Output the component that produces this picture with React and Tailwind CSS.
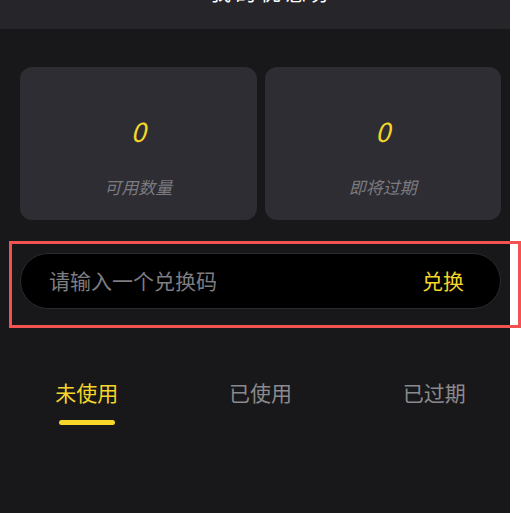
import React, { useState } from 'react';

const font = { fontFamily: '"Noto Sans CJK SC", "Liberation Sans", sans-serif' };

const tabs = ['未使用', '已使用', '已过期'];

export default function App() {
    const [active, setActive] = useState(0);
    const [code, setCode] = useState('');

    return (
        <div className="relative w-[521px] h-[513px] bg-[#18181a] overflow-hidden" style={font}>
            <div className="w-full h-full flex flex-col">
                {/* header, scrolled mostly out of view */}
                <header className="h-[29px] bg-[#26252a] flex justify-center overflow-hidden shrink-0">
                    <div className="-mt-[19px] text-white text-[21px] leading-[20px] tracking-[4px]">&lt; 我的优惠券</div>
                </header>

                <div className="px-5 pt-[38px] grid grid-cols-2 gap-2">
                    <div className="h-[153px] rounded-xl bg-[#2e2d33] flex flex-col items-center">
                        <div className="mt-[49px] text-[27px] leading-[30px] italic text-[#f5d629]">0</div>
                        <div className="mt-[29px] text-[17px] leading-[24px] italic text-[#7b7a80]">可用数量</div>
                    </div>
                    <div className="h-[153px] rounded-xl bg-[#2e2d33] flex flex-col items-center">
                        <div className="mt-[49px] text-[27px] leading-[30px] italic text-[#f5d629]">0</div>
                        <div className="mt-[29px] text-[17px] leading-[24px] italic text-[#7b7a80]">即将过期</div>
                    </div>
                </div>

                <div className="px-5 mt-[33px]">
                    <div className="h-[56px] rounded-full bg-black border border-[#2b2b30] flex items-center pl-[28px] pr-[36px]">
                        <input
                            value={code}
                            onChange={e => setCode(e.target.value)}
                            placeholder="请输入一个兑换码"
                            className="flex-1 min-w-0 bg-transparent outline-none text-[21px] text-white placeholder:text-[#7d7d82]"
                        />
                        <button className="text-[21px] text-[#f5d629]">兑换</button>
                    </div>
                </div>

                <div className="mt-[71px] flex">
                    {tabs.map((t, i) => (
                        <button key={t} onClick={() => setActive(i)} className="flex-1 flex flex-col items-center">
                            <span className={`text-[21px] leading-[24px] ${active === i ? 'text-[#f5d629]' : 'text-[#8a8a8e]'}`}>{t}</span>
                            <span className={`mt-[16px] h-[5px] w-[56px] rounded-full ${active === i ? 'bg-[#f5d629]' : 'bg-transparent'}`} />
                        </button>
                    ))}
                </div>
            </div>

            {/* white strip on the right edge */}
            <div className="absolute right-0 top-0 w-[11px] h-full bg-white" />

            {/* highlight box */}
            <div className="absolute left-[9px] top-[241px] w-[512px] h-[87px] border-[3px] border-[#f25252] pointer-events-none" />
        </div>
    );
}
